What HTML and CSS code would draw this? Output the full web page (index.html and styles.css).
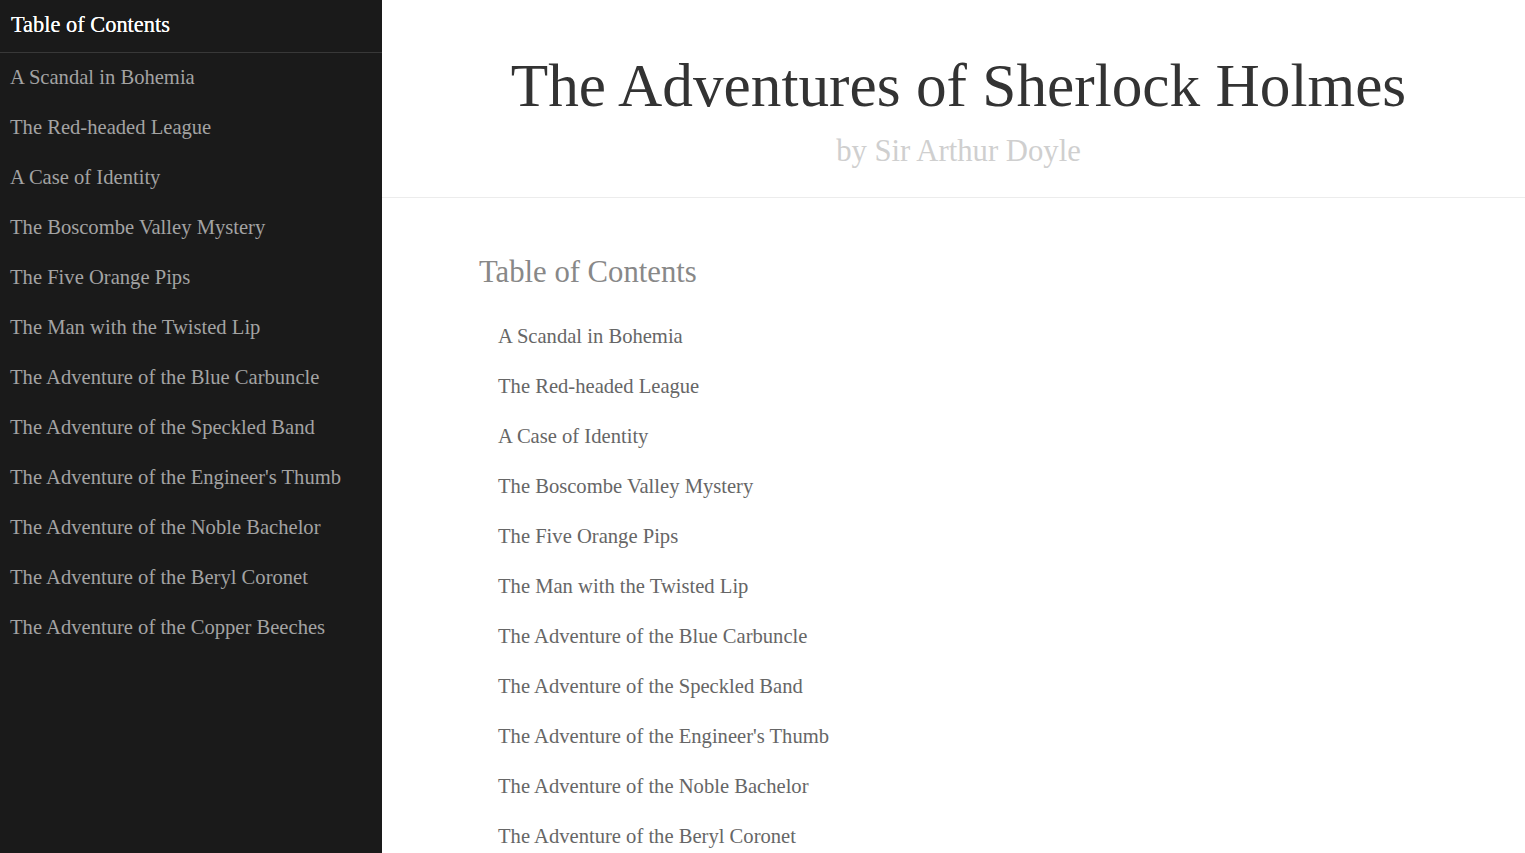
FILE: index.html
```html
<!DOCTYPE html>
<html>
<head>
<meta charset="utf-8">
<link rel="stylesheet" href="styles.css">
</head>
<body>
<div class="app">
  <nav class="sidebar">
    <div class="side-head">Table of Contents</div>
    <ul class="side-list">
      <li>A Scandal in Bohemia</li>
      <li>The Red-headed League</li>
      <li>A Case of Identity</li>
      <li>The Boscombe Valley Mystery</li>
      <li>The Five Orange Pips</li>
      <li>The Man with the Twisted Lip</li>
      <li>The Adventure of the Blue Carbuncle</li>
      <li>The Adventure of the Speckled Band</li>
      <li>The Adventure of the Engineer's Thumb</li>
      <li>The Adventure of the Noble Bachelor</li>
      <li>The Adventure of the Beryl Coronet</li>
      <li>The Adventure of the Copper Beeches</li>
    </ul>
  </nav>
  <main class="main">
    <header class="hero">
      <h1 class="title">The Adventures of Sherlock Holmes</h1>
      <div class="byline">by Sir Arthur Doyle</div>
    </header>
    <section class="toc">
      <h2 class="toc-title">Table of Contents</h2>
      <ul class="toc-list">
        <li>A Scandal in Bohemia</li>
        <li>The Red-headed League</li>
        <li>A Case of Identity</li>
        <li>The Boscombe Valley Mystery</li>
        <li>The Five Orange Pips</li>
        <li>The Man with the Twisted Lip</li>
        <li>The Adventure of the Blue Carbuncle</li>
        <li>The Adventure of the Speckled Band</li>
        <li>The Adventure of the Engineer's Thumb</li>
        <li>The Adventure of the Noble Bachelor</li>
        <li>The Adventure of the Beryl Coronet</li>
        <li>The Adventure of the Copper Beeches</li>
      </ul>
    </section>
  </main>
</div>
</body>
</html>
```
FILE: styles.css
```css
html, body {
  margin: 0;
  padding: 0;
  height: 100%;
  overflow: hidden;
}
body {
  font-family: "Liberation Serif", "Times New Roman", serif;
  background: #ffffff;
}
.app {
  display: flex;
  height: 100vh;
}
.sidebar {
  width: 382px;
  flex: 0 0 382px;
  background: #1a1a1a;
  height: 100%;
  overflow: hidden;
}
.side-head {
  height: 52px;
  border-bottom: 1px solid #383838;
  color: #ffffff;
  font-size: 22.4px;
  line-height: 50px;
  padding-left: 11px;
  text-shadow: 0 0 0.4px #ffffff;
}
.side-list {
  list-style: none;
  margin: 0;
  padding: 0;
}
.side-list li {
  height: 50px;
  line-height: 48px;
  padding-left: 10px;
  color: #a3a3a3;
  font-size: 20.6px;
  white-space: nowrap;
}
.main {
  flex: 1;
  height: 100%;
  overflow-y: auto;
  background: #fff;
}
.main::-webkit-scrollbar {
  width: 2px;
}
.main::-webkit-scrollbar-track {
  background: transparent;
}
.main::-webkit-scrollbar-thumb {
  background: #c4c4c4;
}
.hero {
  height: 198px;
  border-bottom: 1px solid #ececec;
  text-align: center;
  box-sizing: border-box;
  padding: 50px 0 0 10px;
}
.title {
  margin: 0;
  font-weight: normal;
  font-size: 61.3px;
  line-height: 70px;
  color: #333333;
}
.byline {
  margin-top: 13px;
  font-size: 30.7px;
  line-height: 36px;
  color: #cfcfcf;
}
.toc {
  padding: 54px 0 40px 97px;
}
.toc-title {
  margin: 0 0 29px 0;
  font-weight: normal;
  font-size: 30.7px;
  line-height: 40px;
  color: #888888;
}
.toc-list {
  list-style: none;
  margin: 0;
  padding: 0 0 0 19px;
}
.toc-list li {
  height: 50px;
  line-height: 30px;
  color: #666666;
  font-size: 20.6px;
  white-space: nowrap;
}
```
